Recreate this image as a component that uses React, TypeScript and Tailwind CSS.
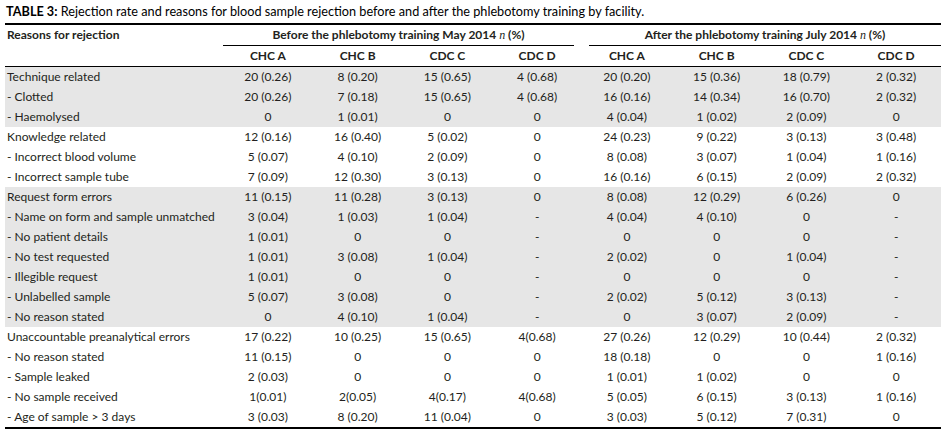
const rows: { label: string; shade: boolean; v: string[] }[] = [
  { label: 'Technique related', shade: true, v: ['20 (0.26)', '8 (0.20)', '15 (0.65)', '4 (0.68)', '20 (0.20)', '15 (0.36)', '18 (0.79)', '2 (0.32)'] },
  { label: '- Clotted', shade: true, v: ['20 (0.26)', '7 (0.18)', '15 (0.65)', '4 (0.68)', '16 (0.16)', '14 (0.34)', '16 (0.70)', '2 (0.32)'] },
  { label: '- Haemolysed', shade: true, v: ['0', '1 (0.01)', '0', '0', '4 (0.04)', '1 (0.02)', '2 (0.09)', '0'] },
  { label: 'Knowledge related', shade: false, v: ['12 (0.16)', '16 (0.40)', '5 (0.02)', '0', '24 (0.23)', '9 (0.22)', '3 (0.13)', '3 (0.48)'] },
  { label: '- Incorrect blood volume', shade: false, v: ['5 (0.07)', '4 (0.10)', '2 (0.09)', '0', '8 (0.08)', '3 (0.07)', '1 (0.04)', '1 (0.16)'] },
  { label: '- Incorrect sample tube', shade: false, v: ['7 (0.09)', '12 (0.30)', '3 (0.13)', '0', '16 (0.16)', '6 (0.15)', '2 (0.09)', '2 (0.32)'] },
  { label: 'Request form errors', shade: true, v: ['11 (0.15)', '11 (0.28)', '3 (0.13)', '0', '8 (0.08)', '12 (0.29)', '6 (0.26)', '0'] },
  { label: '- Name on form and sample unmatched', shade: true, v: ['3 (0.04)', '1 (0.03)', '1 (0.04)', '-', '4 (0.04)', '4 (0.10)', '0', '-'] },
  { label: '- No patient details', shade: true, v: ['1 (0.01)', '0', '0', '-', '0', '0', '0', '-'] },
  { label: '- No test requested', shade: true, v: ['1 (0.01)', '3 (0.08)', '1 (0.04)', '-', '2 (0.02)', '0', '1 (0.04)', '-'] },
  { label: '- Illegible request', shade: true, v: ['1 (0.01)', '0', '0', '-', '0', '0', '0', '-'] },
  { label: '- Unlabelled sample', shade: true, v: ['5 (0.07)', '3 (0.08)', '0', '-', '2 (0.02)', '5 (0.12)', '3 (0.13)', '-'] },
  { label: '- No reason stated', shade: true, v: ['0', '4 (0.10)', '1 (0.04)', '-', '0', '3 (0.07)', '2 (0.09)', '-'] },
  { label: 'Unaccountable preanalytical errors', shade: false, v: ['17 (0.22)', '10 (0.25)', '15 (0.65)', '4(0.68)', '27 (0.26)', '12 (0.29)', '10 (0.44)', '2 (0.32)'] },
  { label: '- No reason stated', shade: false, v: ['11 (0.15)', '0', '0', '0', '18 (0.18)', '0', '0', '1 (0.16)'] },
  { label: '- Sample leaked', shade: false, v: ['2 (0.03)', '0', '0', '0', '1 (0.01)', '1 (0.02)', '0', '0'] },
  { label: '- No sample received', shade: false, v: ['1(0.01)', '2(0.05)', '4(0.17)', '4(0.68)', '5 (0.05)', '6 (0.15)', '3 (0.13)', '1 (0.16)'] },
  { label: '- Age of sample > 3 days', shade: false, v: ['3 (0.03)', '8 (0.20)', '11 (0.04)', '0', '3 (0.03)', '5 (0.12)', '7 (0.31)', '0'] },
]

const facilities = ['CHC A', 'CHC B', 'CDC C', 'CDC D', 'CHC A', 'CHC B', 'CDC C', 'CDC D']

function N() {
  return <span className="font-['Liberation_Serif',serif] italic font-normal">n</span>
}

export default function App() {
  return (
    <div className="w-[943px] h-[437px] bg-white text-[#231f20] font-['Lato',sans-serif] text-[12px]">
      {/* Title */}
      <div className="h-[23px] pl-[6px] leading-[23px] text-[12.7px] text-black">
        <span className="font-bold">TABLE 3:</span> Rejection rate and reasons for blood sample rejection before and after the phlebotomy training by facility.
      </div>

      <div className="ml-[5px] w-[936px] border-t-2 border-b-2 border-black">
        {/* Group headers */}
        <div className="grid grid-cols-[218px_repeat(8,minmax(0,1fr))] h-[21px] font-bold">
          <div className="pl-[2px] leading-[20px]">Reasons for rejection</div>
          <div className="col-span-4 mr-[8px] border-b border-black leading-[20px] text-center">
            Before the phlebotomy training May 2014 <N /> (%)
          </div>
          <div className="col-span-4 ml-[7px] border-b border-black leading-[20px] text-center">
            After the phlebotomy training July 2014 <N /> (%)
          </div>
        </div>

        {/* Facility headers */}
        <div className="grid grid-cols-[218px_repeat(8,minmax(0,1fr))] h-[21px] border-b border-black font-bold">
          <div />
          {facilities.map((f, i) => (
            <div key={i} className="leading-[20px] text-center">{f}</div>
          ))}
        </div>

        {/* Body */}
        {rows.map((r, i) => (
          <div
            key={i}
            className={`grid grid-cols-[218px_repeat(8,minmax(0,1fr))] h-[20px] leading-[20px] ${r.shade ? 'bg-[#e6e6e6]' : ''}`}
          >
            <div className="pl-[2px] whitespace-nowrap">{r.label}</div>
            {r.v.map((c, j) => (
              <div key={j} className="text-center whitespace-nowrap">{c}</div>
            ))}
          </div>
        ))}
      </div>
    </div>
  )
}
